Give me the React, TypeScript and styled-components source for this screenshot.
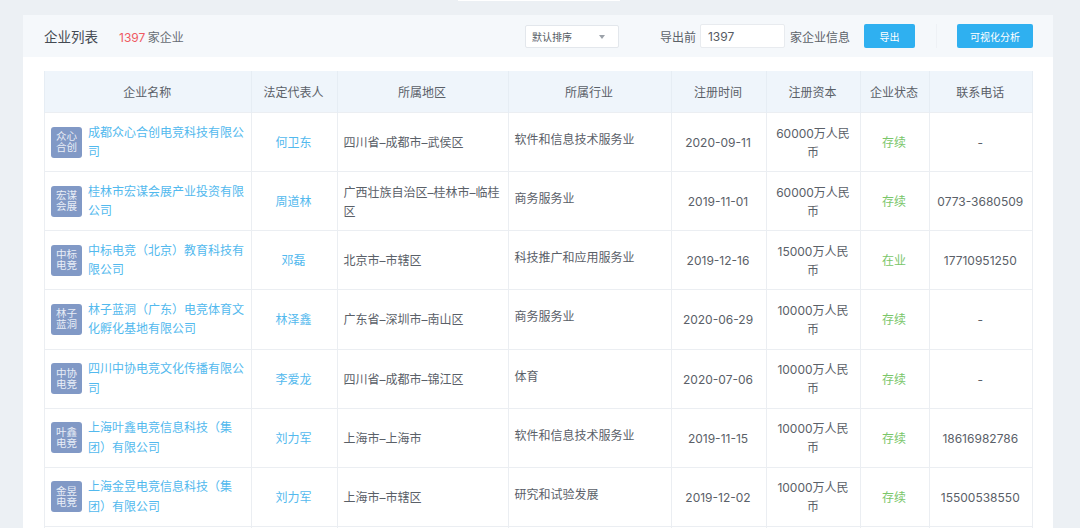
import styled, { createGlobalStyle } from "styled-components";

const GlobalStyle = createGlobalStyle`
  html, body {
    margin: 0;
    height: 528px;
    overflow: hidden;
    background: #ecf0f4;
    font-family: Inter, "Noto Sans CJK SC", sans-serif;
  }
`;

const Page = styled.div`
  width: 1080px;
  height: 528px;
  overflow: hidden;
`;

const TopStrip = styled.div`
  height: 15px;
  display: flex;
  padding-left: 458px;
`;

const TopTab = styled.div`
  width: 162px;
  height: 1px;
  background: #ffffff;
`;

const Card = styled.section`
  width: 1030px;
  margin-left: 23px;
  background: #ffffff;
`;

const Toolbar = styled.header`
  height: 42px;
  display: flex;
  align-items: center;
  padding: 0 20px 0 21px;
  background: #f5f8fb;
  color: #555b63;
`;

const Title = styled.h2`
  margin: 0;
  width: 75px;
  font-size: 13.5px;
  font-weight: 400;
  color: #444a52;
`;

const Count = styled.div`
  font-size: 12px;
  word-spacing: -1px;
  color: #666c74;
`;

const Red = styled.span`
  color: #ef5a62;
`;

const Sort = styled.div`
  width: 94px;
  height: 23px;
  margin: 1px 41px 0 auto;
  padding: 0 13px 0 6px;
  box-sizing: border-box;
  display: flex;
  align-items: center;
  justify-content: space-between;
  background: #ffffff;
  border: 1px solid #e3e7ec;
  border-radius: 2px;
  font-size: 10px;
  color: #555b63;
`;

const Caret = styled.i`
  width: 0;
  height: 0;
  border-left: 3px solid transparent;
  border-right: 3px solid transparent;
  border-top: 4px solid #9ca2a9;
`;

const ExportLabel = styled.span`
  font-size: 12px;
  color: #5c6269;
`;

const CountInput = styled.div`
  width: 85px;
  height: 24px;
  margin: 0 5px 0 4px;
  padding-left: 7px;
  box-sizing: border-box;
  display: flex;
  align-items: center;
  background: #ffffff;
  border: 1px solid #e8ebef;
  border-radius: 2px;
  font-size: 12px;
  color: #555b63;
`;

const ActionButton = styled.button<{ $width: number; $gap: number }>`
  width: ${(p) => p.$width}px;
  height: 24px;
  margin-left: ${(p) => p.$gap}px;
  padding: 0;
  border: none;
  border-radius: 2px;
  background: #2fb0f0;
  color: #ffffff;
  font-family: inherit;
  font-size: 10px;
`;

const Divider = styled.i`
  width: 1px;
  height: 24px;
  margin-left: 21px;
  background: #eef1f5;
`;

const TableWrap = styled.div`
  padding: 14px 20px 0 21px;
`;

const Table = styled.table`
  width: 988px;
  table-layout: fixed;
  border-collapse: collapse;
  font-size: 12px;
  color: #5a6068;
`;

const Head = styled.th`
  height: 41px;
  padding: 0 1px 0 0;
  background: #eff5fb;
  border-left: 1px solid #e6edf4;
  font-weight: 400;
  font-size: 12px;
  color: #5a6068;
  &:last-child {
    border-right: 1px solid #e6edf4;
  }
`;

const Row = styled.tr`
  height: 59.15px;
`;

const Cell = styled.td<{ $center?: boolean; $color?: string }>`
  padding: ${(p) => (p.$center ? "1px 6px 0 5px" : "1px 5px 0 6px")};
  border: 1px solid #ebeef2;
  line-height: 19px;
  text-align: ${(p) => (p.$center ? "center" : "left")};
  color: ${(p) => p.$color || "#5a6068"};
`;

const CapitalCell = styled(Cell)`
  padding: 1px 8px 0;
`;

const CompanyBox = styled.div`
  display: flex;
  align-items: center;
  gap: 6px;
  margin-top: -1px;
`;

const Logo = styled.div`
  flex: none;
  width: 31px;
  height: 31px;
  display: flex;
  align-items: center;
  justify-content: center;
  text-align: center;
  background: #8199c6;
  border-radius: 3px;
  color: #e9eef7;
  font-size: 10.5px;
  line-height: 11px;
`;

const CompanyName = styled.a`
  color: #52b9ee;
  line-height: 19.5px;
`;

const IndustryText = styled.div`
  position: relative;
  top: -3px;
`;

const columns = [206.5, 86, 171, 163, 95, 94, 69, 103.5];
const heads = ["企业名称", "法定代表人", "所属地区", "所属行业", "注册时间", "注册资本", "企业状态", "联系电话"];

const rows = [
  { logo: "众心合创", name: "成都众心合创电竞科技有限公司", person: "何卫东", region: "四川省–成都市–武侯区", industry: "软件和信息技术服务业", date: "2020-09-11", capital: "60000万人民币", status: "存续", phone: "-" },
  { logo: "宏谋会展", name: "桂林市宏谋会展产业投资有限公司", person: "周道林", region: "广西壮族自治区–桂林市–临桂区", industry: "商务服务业", date: "2019-11-01", capital: "60000万人民币", status: "存续", phone: "0773-3680509" },
  { logo: "中标电竞", name: "中标电竞（北京）教育科技有限公司", person: "邓磊", region: "北京市–市辖区", industry: "科技推广和应用服务业", date: "2019-12-16", capital: "15000万人民币", status: "在业", phone: "17710951250" },
  { logo: "林子蓝洞", name: "林子蓝洞（广东）电竞体育文化孵化基地有限公司", person: "林泽鑫", region: "广东省–深圳市–南山区", industry: "商务服务业", date: "2020-06-29", capital: "10000万人民币", status: "存续", phone: "-" },
  { logo: "中协电竞", name: "四川中协电竞文化传播有限公司", person: "李爱龙", region: "四川省–成都市–锦江区", industry: "体育", date: "2020-07-06", capital: "10000万人民币", status: "存续", phone: "-" },
  { logo: "叶鑫电竞", name: "上海叶鑫电竞信息科技（集团）有限公司", person: "刘力军", region: "上海市–上海市", industry: "软件和信息技术服务业", date: "2019-11-15", capital: "10000万人民币", status: "存续", phone: "18616982786" },
  { logo: "金昱电竞", name: "上海金昱电竞信息科技（集团）有限公司", person: "刘力军", region: "上海市–市辖区", industry: "研究和试验发展", date: "2019-12-02", capital: "10000万人民币", status: "存续", phone: "15500538550" },
  { logo: "", name: "", person: "", region: "", industry: "", date: "", capital: "", status: "", phone: "" },
];

export default function App() {
  return (
    <Page>
      <GlobalStyle />
      <TopStrip>
        <TopTab />
      </TopStrip>
      <Card>
        <Toolbar>
          <Title>企业列表</Title>
          <Count>
            <Red>1397</Red> 家企业
          </Count>
          <Sort>
            默认排序
            <Caret />
          </Sort>
          <ExportLabel>导出前</ExportLabel>
          <CountInput>1397</CountInput>
          <ExportLabel>家企业信息</ExportLabel>
          <ActionButton $width={51} $gap={14}>导出</ActionButton>
          <Divider />
          <ActionButton $width={76} $gap={20}>可视化分析</ActionButton>
        </Toolbar>
        <TableWrap>
          <Table>
            <colgroup>
              {columns.map((w, i) => (
                <col key={i} style={{ width: w }} />
              ))}
            </colgroup>
            <thead>
              <tr>
                {heads.map((h) => (
                  <Head key={h}>{h}</Head>
                ))}
              </tr>
            </thead>
            <tbody>
              {rows.map((r, i) => (
                <Row key={i}>
                  <Cell>
                    {r.name && (
                      <CompanyBox>
                        <Logo>{r.logo}</Logo>
                        <CompanyName>{r.name}</CompanyName>
                      </CompanyBox>
                    )}
                  </Cell>
                  <Cell $center $color="#52b9ee">{r.person}</Cell>
                  <Cell>{r.region}</Cell>
                  <Cell><IndustryText>{r.industry}</IndustryText></Cell>
                  <Cell $center>{r.date}</Cell>
                  <CapitalCell $center>{r.capital}</CapitalCell>
                  <Cell $center $color="#7ac66a">{r.status}</Cell>
                  <Cell $center>{r.phone}</Cell>
                </Row>
              ))}
            </tbody>
          </Table>
        </TableWrap>
      </Card>
    </Page>
  );
}
